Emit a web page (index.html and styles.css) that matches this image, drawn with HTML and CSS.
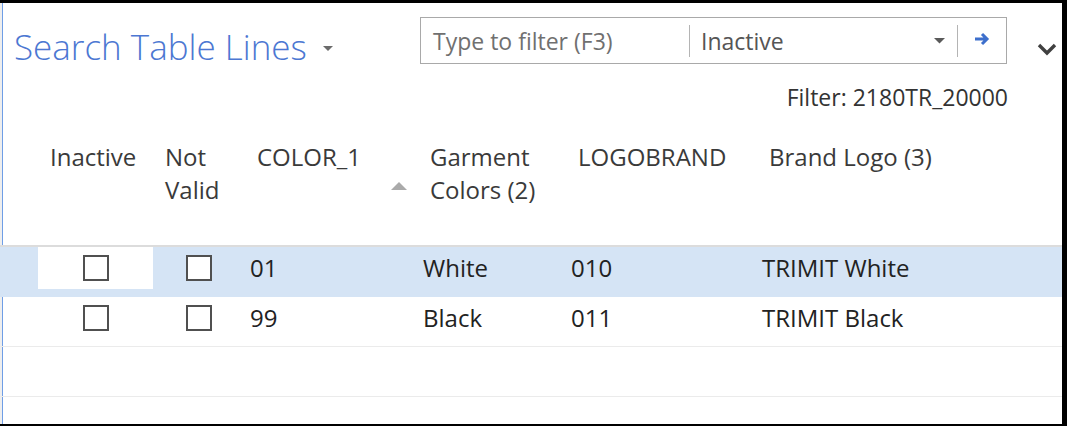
FILE: index.html
```html
<!DOCTYPE html>
<html lang="en">
<head>
  <meta charset="UTF-8">
  <title>Search Table Lines</title>
  <link rel="stylesheet" href="styles.css">
</head>
<body>

<div class="window">
  <div class="toolbar">
    <div class="page-title">
      Search Table Lines
      <svg class="title-caret" width="10" height="6" viewBox="0 0 10 6"><path d="M0 0h10L5 5z" fill="#6b6b6b"/></svg>
    </div>

    <div class="filter-box">
      <div class="filter-input">Type to filter (F3)</div>
      <div class="filter-field">
        <span>Inactive</span>
        <svg width="11" height="6" viewBox="0 0 11 6"><path d="M0 0h11L5.5 5.5z" fill="#5a5a5a"/></svg>
      </div>
      <button class="filter-go">
        <svg width="17" height="14" viewBox="0 0 17 14"><path d="M1 7h12M8 2l5 5-5 5" fill="none" stroke="#3d6fcc" stroke-width="3"/></svg>
      </button>
    </div>

    <button class="collapse">
      <svg width="20" height="14" viewBox="0 0 20 14"><path d="M2 3l8 8 8-8" fill="none" stroke="#404040" stroke-width="3.4"/></svg>
    </button>
  </div>

  <div class="filter-info">Filter: 2180TR_20000</div>

  <div class="grid">
    <div class="grid-head">
      <div class="cell spacer"></div>
      <div class="cell">Inactive</div>
      <div class="cell">Not<br>Valid</div>
      <div class="cell sorted">
        <span>COLOR_1</span>
        <svg class="sort-arrow" width="16" height="8" viewBox="0 0 16 8"><path d="M0 8h16L8 0z" fill="#aaaaaa"/></svg>
      </div>
      <div class="cell">Garment<br>Colors (2)</div>
      <div class="cell">LOGOBRAND</div>
      <div class="cell">Brand Logo (3)</div>
      <div class="cell"></div>
    </div>

    <div class="grid-row selected">
      <div class="cell spacer"></div>
      <div class="cell check focused"><span class="box"></span></div>
      <div class="cell check"><span class="box"></span></div>
      <div class="cell">01</div>
      <div class="cell">White</div>
      <div class="cell">010</div>
      <div class="cell">TRIMIT White</div>
      <div class="cell"></div>
    </div>

    <div class="grid-row">
      <div class="cell spacer"></div>
      <div class="cell check"><span class="box"></span></div>
      <div class="cell check"><span class="box"></span></div>
      <div class="cell">99</div>
      <div class="cell">Black</div>
      <div class="cell">011</div>
      <div class="cell">TRIMIT Black</div>
      <div class="cell"></div>
    </div>

    <div class="grid-row empty"></div>
  </div>
</div>

</body>
</html>
```

FILE: styles.css
```css
body {
  margin: 0;
  background: #000;
  font-family: 'Open Sans', 'Noto Sans', sans-serif;
  color: #222;
}

.window {
  box-sizing: border-box;
  width: 1067px;
  height: 426px;
  background: #fff;
  border-top: 3px solid #000;
  border-right: 5px solid #000;
  border-bottom: 2px solid #000;
  box-shadow: inset 2px 0 0 #eeeeee, inset 3px 0 0 #6f9ee6;
  overflow: hidden;
}

/* top bar */

.toolbar {
  display: flex;
  align-items: flex-start;
  height: 64px;
}

.page-title {
  display: flex;
  align-items: center;
  margin: 24px 0 0 14px;
  font-size: 35px;
  font-weight: 300;
  line-height: 40px;
  color: #4c77d2;
  white-space: nowrap;
}

.title-caret {
  margin: 3px 0 0 16px;
}

.filter-box {
  box-sizing: border-box;
  display: flex;
  align-items: center;
  width: 587px;
  height: 47px;
  margin: 14px 0 0 auto;
  border: 1px solid #a9a9a9;
  font-size: 23px;
}

.filter-input {
  width: 256px;
  padding-left: 12px;
  color: #707070;
  border-right: 1px solid #b4b4b4;
  line-height: 32px;
}

.filter-field {
  flex: 1;
  display: flex;
  align-items: center;
  justify-content: space-between;
  padding: 0 12px 0 11px;
  color: #555;
  border-right: 1px solid #b4b4b4;
  line-height: 32px;
}

.filter-go {
  width: 48px;
  height: 32px;
  padding: 0;
  border: none;
  background: none;
}

.collapse {
  width: 30px;
  height: 20px;
  margin: 37px 0 0 25px;
  padding: 0;
  border: none;
  background: none;
}

.filter-info {
  margin-top: 15px;
  padding-right: 54px;
  text-align: right;
  font-size: 23px;
  line-height: 30px;
  color: #333;
}

/* table */

.grid-head,
.grid-row {
  display: grid;
  grid-template-columns: 38px 115px 92px 173px 148px 191px 1fr;
}

.grid-head {
  box-sizing: border-box;
  height: 135px;
  padding-top: 28px;
  border-bottom: 2px solid #dcdcdc;
  font-size: 24px;
  line-height: 33px;
  color: #3a3a3a;
}

.grid-head .cell {
  padding-left: 12px;
}

.grid-head .spacer {
  padding: 0;
}

.grid-head .sorted {
  display: flex;
  justify-content: space-between;
  padding-right: 11px;
}

.sort-arrow {
  margin-top: 42px;
}

.grid-row {
  box-sizing: border-box;
  height: 50px;
  border-bottom: 1px solid #ebebeb;
  font-size: 24px;
}

.grid-row .cell {
  display: flex;
  align-items: center;
  padding-left: 5px;
}

.grid-row.selected {
  background: #d5e4f5;
  border-bottom: none;
}

.grid-row .check {
  justify-content: center;
  padding: 0;
}

.grid-row .focused {
  background: #fff;
}

.box {
  box-sizing: border-box;
  width: 26px;
  height: 26px;
  background: #fff;
  border: 2px solid #505050;
}
```
